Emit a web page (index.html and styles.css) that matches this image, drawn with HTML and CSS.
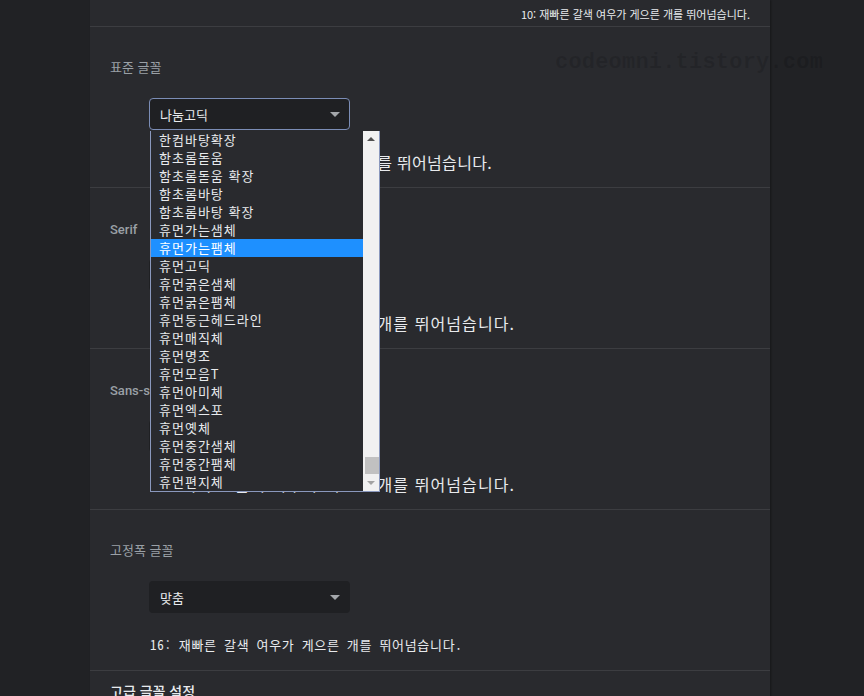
FILE: index.html
```html
<!DOCTYPE html>
<html lang="ko">
<head>
  <meta charset="UTF-8">
  <title>글꼴 맞춤설정</title>
  <link rel="stylesheet" href="styles.css">
</head>
<body>
  <div class="page">
    <div class="card">
      <div class="top-row">10: 재빠른 갈색 여우가 게으른 개를 뛰어넘습니다.</div>

      <div class="section">
        <div class="label">표준 글꼴</div>
        <div class="select focused">
          <span>나눔고딕</span>
          <span class="arrow"></span>
        </div>
        <div class="sample">16: 재빠른 갈색 여우가 게으른 개를 뛰어넘습니다.</div>
      </div>

      <div class="section">
        <div class="label strong">Serif</div>
        <div class="select">
          <span>바탕</span>
          <span class="arrow"></span>
        </div>
        <div class="sample wide">16: 재빠른 갈색 여우가 게으른 개를 뛰어넘습니다.</div>
      </div>

      <div class="section">
        <div class="label strong">Sans-serif</div>
        <div class="select">
          <span>돋움</span>
          <span class="arrow"></span>
        </div>
        <div class="sample wide">16: 재빠른 갈색 여우가 게으른 개를 뛰어넘습니다.</div>
      </div>

      <div class="section">
        <div class="label">고정폭 글꼴</div>
        <div class="select">
          <span>맞춤</span>
          <span class="arrow"></span>
        </div>
        <div class="sample mono">16: 재빠른 갈색 여우가 게으른 개를 뛰어넘습니다.</div>
      </div>

      <div class="advanced">고급 글꼴 설정</div>
    </div>

    <div class="dropdown">
      <ul class="options">
        <li>한컴바탕확장</li>
        <li>함초롬돋움</li>
        <li>함초롬돋움 확장</li>
        <li>함초롬바탕</li>
        <li>함초롬바탕 확장</li>
        <li>휴먼가는샘체</li>
        <li class="active">휴먼가는팸체</li>
        <li>휴먼고딕</li>
        <li>휴먼굵은샘체</li>
        <li>휴먼굵은팸체</li>
        <li>휴먼둥근헤드라인</li>
        <li>휴먼매직체</li>
        <li>휴먼명조</li>
        <li>휴먼모음T</li>
        <li>휴먼아미체</li>
        <li>휴먼엑스포</li>
        <li>휴먼옛체</li>
        <li>휴먼중간샘체</li>
        <li>휴먼중간팸체</li>
        <li>휴먼편지체</li>
      </ul>
      <div class="scrollbar">
        <span class="up"></span>
        <span class="thumb"></span>
        <span class="down"></span>
      </div>
    </div>

    <div class="watermark">codeomni.tistory.com</div>
  </div>
</body>
</html>
```

FILE: styles.css
```css
body {
  margin: 0;
  background-color: #212225;
  font-family: "Noto Sans CJK KR", "Noto Sans", sans-serif;
  color: #e8eaed;
  height: 696px;
  overflow: hidden;
}

.page {
  position: relative;
  width: 864px;
  height: 696px;
}

.card {
  width: 680px;
  margin-left: 90px;
  background-color: #292a2e;
  box-shadow: 1px 0 2px rgba(0, 0, 0, 0.35);
  min-height: 696px;
}

.top-row {
  box-sizing: border-box;
  height: 27px;
  padding: 2px 20px 0 0;
  border-bottom: 1px solid #3c3d41;
  text-align: right;
  font-size: 11px;
  line-height: 24px;
}

.section {
  padding: 30px 0 13px 20px;
  border-bottom: 1px solid #3c3d41;
}

.label {
  font-size: 13px;
  line-height: 20px;
  color: #9aa0a6;
}

.label.strong {
  font-family: Roboto, "Noto Sans CJK KR", sans-serif;
  font-weight: 500;
  padding-top: 2px;
  margin-bottom: -2px;
}

.select {
  box-sizing: border-box;
  width: 201px;
  height: 32px;
  margin: 21px 0 0 39px;
  background-color: #1f2023;
  border: 1px solid transparent;
  border-radius: 4px;
  display: flex;
  align-items: center;
  justify-content: space-between;
  padding: 0 9px 0 10px;
  font-size: 13px;
  color: #e8eaed;
}

.select.focused {
  border-color: #7b8db6;
}

.arrow {
  width: 0;
  height: 0;
  border-left: 5px solid transparent;
  border-right: 5px solid transparent;
  border-top: 5px solid #a4a7ab;
}

.sample {
  margin: 20px 0 0 40px;
  font-size: 16px;
  line-height: 24px;
  letter-spacing: 0.3px;
  white-space: nowrap;
}

.sample.wide {
  letter-spacing: 1.1px;
}

.sample.mono {
  font-family: "Noto Sans Mono CJK KR", "DejaVu Sans Mono", "Noto Sans CJK KR", monospace;
  font-size: 13px;
  letter-spacing: 0.7px;
}

.advanced {
  padding: 10px 0 0 20px;
  font-size: 14px;
  font-weight: 500;
  line-height: 20px;
}

.dropdown {
  position: absolute;
  left: 150px;
  top: 131px;
  width: 230px;
  height: 361px;
  box-sizing: border-box;
  border: 1px solid #8a98bd;
  border-top: none;
  background-color: #292a2e;
  display: flex;
}

.options {
  list-style: none;
  margin: 0;
  padding: 0;
  flex: 1;
}

.options li {
  height: 18px;
  line-height: 18px;
  padding-left: 8px;
  font-size: 13px;
  letter-spacing: 1px;
  color: #e8eaed;
  white-space: nowrap;
}

.options li.active {
  background-color: #1e90ff;
  color: #fff;
}

.scrollbar {
  width: 16px;
  background-color: #f1f1f1;
  position: relative;
}

.scrollbar .up,
.scrollbar .down {
  position: absolute;
  left: 4px;
  width: 0;
  height: 0;
  border-left: 4px solid transparent;
  border-right: 4px solid transparent;
}

.scrollbar .up {
  top: 6px;
  border-bottom: 4px solid #505050;
}

.scrollbar .down {
  bottom: 6px;
  border-top: 4px solid #a3a3a3;
}

.scrollbar .thumb {
  position: absolute;
  left: 2px;
  right: 0;
  top: 326px;
  height: 17px;
  background-color: #c1c1c1;
}

.watermark {
  position: absolute;
  left: 555px;
  top: 50px;
  font-family: "Liberation Mono", monospace;
  font-weight: bold;
  font-size: 22px;
  line-height: 26px;
  letter-spacing: 0.2px;
  color: rgba(0, 0, 0, 0.13);
}
```
